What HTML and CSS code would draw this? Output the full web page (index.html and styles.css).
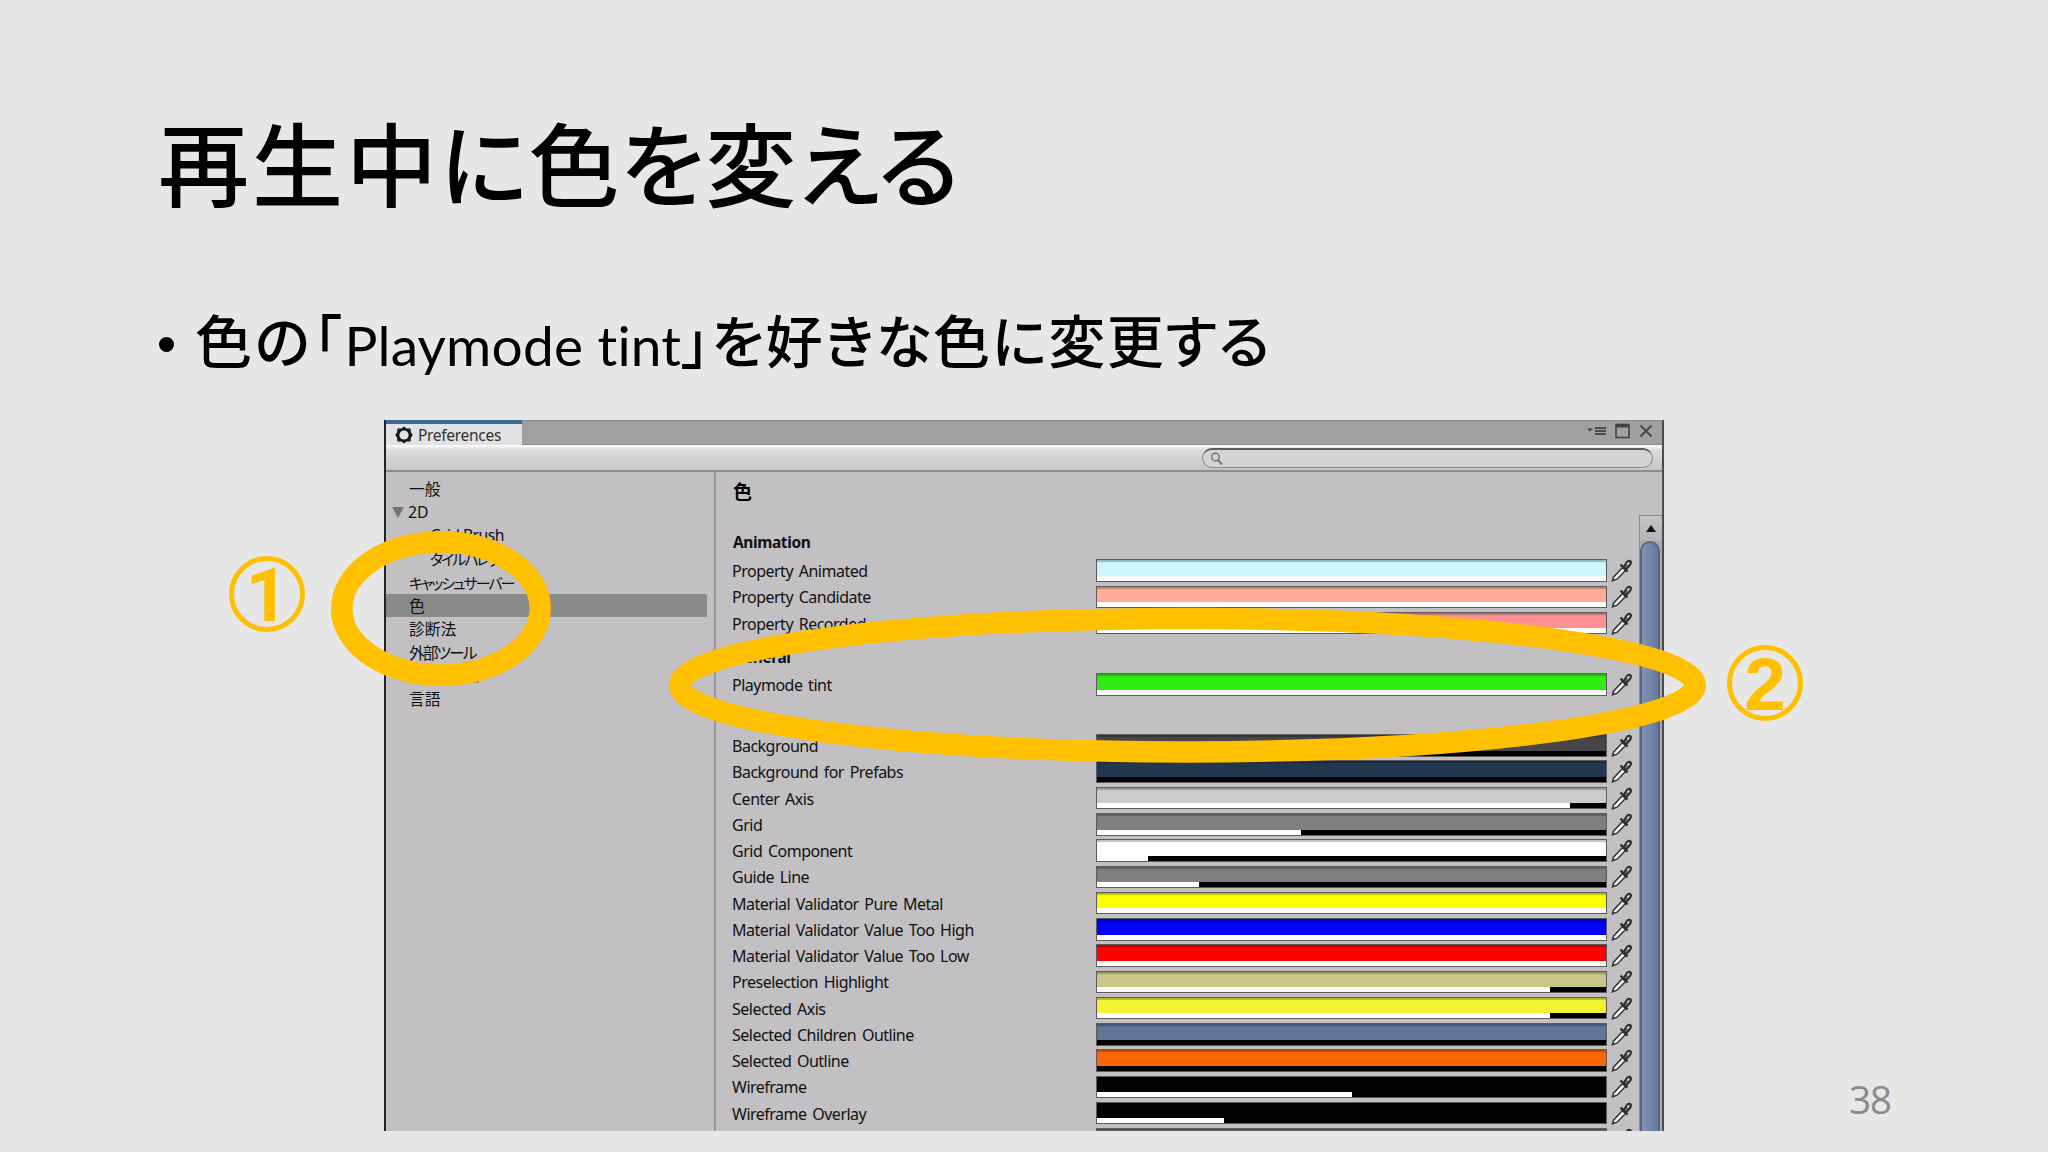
FILE: index.html
```html
<!DOCTYPE html>
<html lang="ja">
<head>
    <meta charset="UTF-8">
    <meta name="viewport" content="width=device-width, initial-scale=1.0">
    <title>再生中に色を変える</title>
    <link rel="stylesheet" href="styles.css">
</head>
<body>
    <svg width="0" height="0" class="defs">
        <symbol id="dropper" viewBox="0 0 21 23">
            <path d="M1.5 21.8 L2.5 18.2 L11.5 8.5 L14.5 11.5 L6 20.2Z" fill="#f4f4f4" stroke="#333" stroke-width="1.5"/>
            <path d="M9.5 5.5 L16.5 12.5" stroke="#2c2c2c" stroke-width="2.4"/>
            <path d="M12.5 8 L16 2.8 Q18 0.8 19.6 2.2 Q20.8 3.8 19.2 5.8 L15 10.5Z" fill="#666" stroke="#2c2c2c" stroke-width="1.8"/>
            <path d="M16.4 5.4 L18 3.6" stroke="#ddd" stroke-width="1.6"/>
        </symbol>
    </svg>

    <div class="slide">
        <h1><span class="kanji">再生中</span><span class="kana">に色を変える</span></h1>
        <div class="bullet">
            <span class="dot"></span>
            <p><span class="jp-a">色の「</span><span class="latin">Playmode tint</span><span class="jp-b">」を好きな色に変更する</span></p>
        </div>

        <div class="window">
            <div class="tabbar">
                <div class="tab">
                    <svg width="18" height="18" viewBox="0 0 18 18">
                        <path d="M9 0.5 L11.5 2.5 L15.5 2.6 L16 6.5 L17.8 9 L16 11.5 L15.5 15.4 L11.5 15.5 L9 17.5 L6.5 15.5 L2.5 15.4 L2 11.5 L0.2 9 L2 6.5 L2.5 2.6 L6.5 2.5Z" fill="#1a1a1a"/>
                        <circle cx="9" cy="9" r="4.6" fill="#e2e1e3"/>
                    </svg>
                    <span>Preferences</span>
                </div>
                <div class="controls">
                    <svg width="19" height="16" viewBox="0 0 19 16"><path d="M0 5.5 H6 L3 8.5Z" fill="#444"/><path d="M8 5H19M8 8H19M8 11H19" stroke="#4c4c4c" stroke-width="1.8"/></svg>
                    <svg width="15" height="16" viewBox="0 0 15 16"><rect x="1" y="1.5" width="13" height="13" fill="none" stroke="#444" stroke-width="1.6"/><path d="M1 3H14" stroke="#444" stroke-width="3"/></svg>
                    <svg width="14" height="16" viewBox="0 0 14 16"><path d="M1.5 2.5L12.5 13.5M12.5 2.5L1.5 13.5" stroke="#4a4a4a" stroke-width="2"/></svg>
                </div>
            </div>
            <div class="toolbar">
                <div class="search">
                    <svg width="14" height="14" viewBox="0 0 14 14"><circle cx="5.5" cy="5" r="3.8" fill="none" stroke="#777" stroke-width="1.5"/><path d="M8 8L12 12.5" stroke="#777" stroke-width="2"/></svg>
                </div>
            </div>
            <div class="content">
                <div class="sidebar">
                    <div class="item">一般</div>
                    <div class="item parent">2D</div>
                    <div class="item child tight">Grid Brush</div>
                    <div class="item child narrow">タイルパレット</div>
                    <div class="item narrow">キャッシュサーバー</div>
                    <div class="item selected">色</div>
                    <div class="item">診断法</div>
                    <div class="item narrow-b">外部ツール</div>
                    <div class="item narrow">GI キャッシュ</div>
                    <div class="item">言語</div>
                </div>
                <div class="panel">
                    <h2>色</h2>
                    <div id="colorList"></div>
                </div>
                <div class="scrollbar">
                    <div class="arrow"></div>
                    <div class="thumb"></div>
                </div>
            </div>
        </div>

        <svg class="rings" width="2048" height="1152" viewBox="0 0 2048 1152">
            <ellipse cx="441" cy="608.5" rx="99.25" ry="66.5"/>
            <ellipse cx="1187.5" cy="685.2" rx="507.75" ry="66.7"/>
        </svg>
        <div class="number number-one">1</div>
        <div class="number number-two">2</div>
        <div class="page">38</div>
    </div>

    <script>
        // [label, color, alpha in percent], a plain string is a section heading
        const colors = [
            'Animation',
            ['Property Animated', '#cdf7fc', 100],
            ['Property Candidate', '#feae98', 100],
            ['Property Recorded', '#fe9292', 100],
            'General',
            ['Playmode tint', '#30ec12', 100],
            'Scene',
            ['Background', '#474547', 0],
            ['Background for Prefabs', '#20374f', 0],
            ['Center Axis', '#cccacc', 93],
            ['Grid', '#817f81', 40],
            ['Grid Component', '#ffffff', 10],
            ['Guide Line', '#817f81', 20],
            ['Material Validator Pure Metal', '#fdff00', 100],
            ['Material Validator Value Too High', '#0000fe', 100],
            ['Material Validator Value Too Low', '#fe0000', 100],
            ['Preselection Highlight', '#c9c788', 89],
            ['Selected Axis', '#f2f232', 89],
            ['Selected Children Outline', '#5e7498', 0],
            ['Selected Outline', '#fb6604', 0],
            ['Wireframe', '#000000', 50],
            ['Wireframe Overlay', '#000000', 25],
            ['', '#777777', 100]
        ];

        const list = document.getElementById('colorList');
        for (const entry of colors) {
            const div = document.createElement('div');
            if (typeof entry === 'string') {
                div.className = 'heading';
                div.textContent = entry;
            } else {
                const [label, color, alpha] = entry;
                div.className = 'color-row';
                div.innerHTML = `
                    <span class="label">${label}</span>
                    <div class="swatch" style="background-color: ${color}">
                        <div class="alpha"><div class="alpha-fill" style="width: ${alpha}%"></div></div>
                    </div>
                    <svg class="dropper" width="21" height="23"><use href="#dropper"/></svg>
                `;
            }
            list.appendChild(div);
        }
    </script>
</body>
</html>
```
FILE: styles.css
```css
* {
    box-sizing: border-box;
}
body {
    margin: 0;
    background-color: #e7e7e7;
    font-family: "Noto Sans", "Noto Sans CJK JP", sans-serif;
    color: #000;
}
.defs {
    position: absolute;
}
.slide {
    position: relative;
    width: 2048px;
    height: 1152px;
    overflow: hidden;
    padding-top: 105px;
}
h1 {
    margin: 0 0 0 158px;
    height: 110px;
    line-height: 110px;
    font-family: "Noto Sans CJK JP", sans-serif;
    font-weight: 500;
    font-size: 91px;
    white-space: nowrap;
}
.kanji {
    letter-spacing: 3px;
}
.kana {
    font-feature-settings: "palt";
    letter-spacing: 0.9px;
}
.bullet {
    display: flex;
    align-items: center;
    height: 80px;
    margin: 89px 0 0 159px;
}
.dot {
    width: 15px;
    height: 15px;
    border-radius: 50%;
    background-color: #000;
    margin-right: 21px;
}
.bullet p {
    margin: 0;
    line-height: 80px;
    padding-bottom: 13px;
    font-family: "Noto Sans CJK JP", sans-serif;
    font-weight: 500;
    font-size: 57px;
    white-space: nowrap;
    font-feature-settings: "palt";
}
.jp-a {
    letter-spacing: 3px;
}
.jp-b {
    letter-spacing: 1.6px;
}
.latin {
    display: inline-block;
    padding-top: 3px;
    line-height: 60px;
    vertical-align: -3px;
    font-family: Lato, sans-serif;
    font-weight: 400;
    font-size: 55px;
    font-variant-ligatures: none;
    letter-spacing: 0.2px;
}
.window {
    display: flex;
    flex-direction: column;
    width: 1280px;
    height: 711px;
    margin: 36px 0 0 384px;
    background-color: #c2c0c3;
    border-left: 2px solid #222;
    border-right: 2px solid #4c4a4e;
    overflow: hidden;
}
.tabbar {
    display: flex;
    justify-content: space-between;
    height: 25px;
    flex: none;
    background-color: #a0a0a1;
    border-top: 1px solid #8c8c8e;
    border-bottom: 1px solid #8a8a8c;
}
.tab {
    display: flex;
    align-items: center;
    gap: 5px;
    width: 136px;
    height: 25px;
    margin-top: -1px;
    padding-left: 9px;
    background-color: #e2e1e3;
    border-top: 4px solid #3f6a93;
    font-size: 15.5px;
    letter-spacing: -0.3px;
    color: #333;
}
.controls {
    display: flex;
    gap: 9px;
    padding: 2px 9px 0 0;
}
.toolbar {
    display: flex;
    justify-content: flex-end;
    height: 27px;
    flex: none;
    padding: 3px 9px 0 0;
    background: linear-gradient(#fff, #dddbde 20%, #c8c6c9);
    border-bottom: 2px solid #8f8d90;
}
.search {
    width: 451px;
    height: 20px;
    padding: 2px 0 0 7px;
    border: 1px solid #8a888b;
    border-top: 2px solid #5c5a5d;
    border-radius: 10px;
    background-color: #d5d3d6;
    line-height: 0;
}
.content {
    display: flex;
    flex: 1;
    min-height: 0;
}
.sidebar {
    width: 330px;
    flex: none;
    padding-top: 5px;
    border-right: 2px solid #98969a;
}
.item {
    display: flex;
    align-items: center;
    width: 321px;
    height: 23.35px;
    padding-left: 23px;
    font-size: 15.8px;
    white-space: nowrap;
    color: #111;
}
.tight {
    letter-spacing: -0.6px;
}
.narrow {
    font-feature-settings: "palt";
    letter-spacing: -2px;
    font-size: 15px;
}
.narrow-b {
    font-feature-settings: "palt";
    letter-spacing: -2px;
}
.parent {
    padding-left: 6px;
}
.parent::before {
    content: "";
    margin-right: 4px;
    border: 6.5px solid transparent;
    border-top: 11px solid #737173;
    border-bottom: 0;
}
.child {
    padding-left: 44px;
}
.selected {
    background-color: #8b8a8b;
}
.panel {
    flex: 1;
    padding-left: 16px;
    overflow: hidden;
}
h2 {
    margin: 0;
    height: 53px;
    padding: 8px 0 0 1px;
    font-size: 19px;
    line-height: 24px;
    font-weight: 700;
}
.heading {
    height: 34.9px;
    padding-left: 1px;
    line-height: 42px;
    font-size: 15.5px;
    letter-spacing: -0.4px;
    font-weight: 700;
    color: #111;
}
.heading:first-child {
    height: 32.5px;
    line-height: 34px;
}
.color-row {
    display: flex;
    align-items: center;
    height: 26.27px;
}
.label {
    width: 364px;
    flex: none;
    padding-top: 1px;
    font-size: 16px;
    letter-spacing: -0.5px;
    word-spacing: 2px;
    white-space: nowrap;
    color: #111;
}
.swatch {
    display: flex;
    align-items: flex-end;
    width: 511px;
    height: 22.5px;
    flex: none;
    border: 1.5px solid #5d5b5e;
    box-shadow: inset 0 2px 1px rgba(0,0,0,0.25);
}
.alpha {
    width: 100%;
    height: 5px;
    background-color: #000;
}
.alpha-fill {
    height: 5px;
    background-color: #fff;
}
.dropper {
    margin-left: 4px;
    flex: none;
}
.scrollbar {
    display: flex;
    flex-direction: column;
    width: 23px;
    flex: none;
    margin-top: 43px;
    background-color: #aaa8ab;
    border-left: 1px solid #8d8b8e;
    border-top: 1px solid #8d8b8e;
}
.arrow {
    display: flex;
    align-items: center;
    justify-content: center;
    height: 25px;
    flex: none;
    background: linear-gradient(#c6c4c7, #b5b3b6);
}
.arrow::before {
    content: "";
    border: 5.5px solid transparent;
    border-bottom: 7px solid #111;
    border-top: 0;
}
.thumb {
    flex: 1;
    width: 20px;
    border: 2px solid #59677f;
    border-bottom: 0;
    border-radius: 10px 10px 0 0;
    background: linear-gradient(90deg, #8291b3, #7587ac 50%, #66779a);
}

/* annotations drawn over the window */
.rings {
    position: absolute;
    left: 0;
    top: 0;
    fill: none;
    stroke: #ffc000;
    stroke-width: 21.5px;
}
.number {
    position: absolute;
    width: 76px;
    height: 76px;
    border: 5px solid #ffc000;
    border-radius: 50%;
    color: #ffc000;
    font-family: Roboto, sans-serif;
    font-weight: 700;
    font-size: 75px;
    line-height: 68px;
    text-align: center;
}
.number-one {
    left: 229px;
    top: 556px;
}
.number-two {
    left: 1727px;
    top: 645px;
    font-family: "Liberation Sans", sans-serif;
}
.page {
    position: absolute;
    left: 1849px;
    top: 1075px;
    font-family: "Open Sans", sans-serif;
    font-size: 39px;
    line-height: 48px;
    letter-spacing: -1.5px;
    color: #8b8b8e;
}
```
